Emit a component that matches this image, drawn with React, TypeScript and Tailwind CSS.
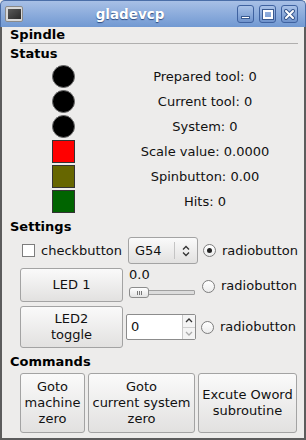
import React from 'react';

const font = { fontFamily: '"DejaVu Sans", "Liberation Sans", sans-serif' };

const TitleButton = ({ children }: { children: React.ReactNode }) => (
  <div className="w-[17px] h-[18px] rounded-[3px] border border-[#3f62a0] bg-gradient-to-b from-[#a9c2e8] to-[#6f93cc] flex items-center justify-center">
    {children}
  </div>
);

const Led = ({ shape, color }: { shape: 'circle' | 'square'; color: string }) =>
  shape === 'circle' ? (
    <div className="w-[23px] h-[23px] rounded-full border border-[#6a6a6a]" style={{ background: color }} />
  ) : (
    <div className="w-[23px] h-[23px] border border-[#333]" style={{ background: color }} />
  );

const Radio = ({ checked }: { checked?: boolean }) => (
  <div className="w-[13px] h-[13px] rounded-full border border-[#7d7d7d] bg-gradient-to-b from-white to-[#ececec] flex items-center justify-center">
    {checked && <div className="w-[5px] h-[5px] rounded-full bg-[#222]" />}
  </div>
);

const Btn = ({ className, children }: { className: string; children: React.ReactNode }) => (
  <div className={`rounded-[3px] border border-[#a3a3a3] bg-gradient-to-b from-[#fafafa] to-[#e2e1e0] flex items-center justify-center text-center leading-[16px] text-[13px] text-[#111] ${className}`}>
    {children}
  </div>
);

const statusRows = [
  { shape: 'circle' as const, color: '#000', label: 'Prepared tool: 0' },
  { shape: 'circle' as const, color: '#000', label: 'Current tool: 0' },
  { shape: 'circle' as const, color: '#000', label: 'System: 0' },
  { shape: 'square' as const, color: '#ff0000', label: 'Scale value: 0.0000' },
  { shape: 'square' as const, color: '#666600', label: 'Spinbutton: 0.00' },
  { shape: 'square' as const, color: '#006400', label: 'Hits: 0' },
];

export default function App() {
  return (
    <div className="w-[306px] h-[440px] flex flex-col bg-[#edeceb] text-[#111]" style={font}>
      {/* title bar */}
      <div className="h-[27px] shrink-0 flex items-center px-[4px] bg-gradient-to-b from-[#a8c0e6] to-[#7199d2] border-x border-t border-[#4b6ea8] rounded-t-[5px]">
        <div className="w-[18px] h-[16px] rounded-[2px] bg-[#d8d8d8] border border-[#8a8a8a] flex items-center justify-center">
          <div className="w-[13px] h-[10px] bg-gradient-to-br from-[#5a5a5a] to-[#2a2a2a]" />
        </div>
        <div className="flex-1 text-center text-white font-bold text-[13.5px] [text-shadow:0_1px_1px_#2b4a80]">gladevcp</div>
        <div className="flex gap-[5px] mr-[3px]">
          <TitleButton>
            <div className="w-[9px] h-[3px] bg-white border border-[#3a5a90] mt-[7px]" />
          </TitleButton>
          <TitleButton>
            <div className="w-[10px] h-[9px] border-2 border-white outline outline-1 outline-[#3a5a90]" />
          </TitleButton>
          <TitleButton>
            <svg width="11" height="11" viewBox="0 0 11 11">
              <path d="M2 2 L9 9 M9 2 L2 9" stroke="#3a5a90" strokeWidth="4" strokeLinecap="round" />
              <path d="M2 2 L9 9 M9 2 L2 9" stroke="#fff" strokeWidth="2" strokeLinecap="round" />
            </svg>
          </TitleButton>
        </div>
      </div>

      {/* body */}
      <div className="flex-1 flex flex-col border-x-2 border-b-2 border-[#5c5c5c]">
        <div className="h-[15px] ml-[8px] font-bold text-[13px] leading-[15px] text-black">Spindle</div>
        <div className="h-px ml-[18px] mr-[6px] mt-[1px] bg-[#b0afae]" />
        <div className="h-[15px] ml-[8px] mt-[2px] font-bold text-[13px] leading-[15px] text-black">Status</div>

        <div className="mt-[3px] flex flex-col">
          {statusRows.map((r) => (
            <div key={r.label} className="h-[25px] flex items-center">
              <div className="w-[122px] flex justify-center">
                <Led shape={r.shape} color={r.color} />
              </div>
              <div className="w-[162px] text-center text-[13px]">{r.label}</div>
            </div>
          ))}
        </div>

        <div className="h-[15px] ml-[8px] mt-[5px] font-bold text-[13px] leading-[15px] text-black">Settings</div>

        {/* row 1 */}
        <div className="h-[27px] mt-[3px] flex items-center text-[13px]">
          <div className="ml-[20px] w-[13px] h-[13px] border border-[#7d7d7d] bg-white" />
          <span className="ml-[6px]">checkbutton</span>
          <div className="ml-[6px] w-[70px] h-[27px] rounded-[3px] border border-[#a3a3a3] bg-gradient-to-b from-[#fafafa] to-[#e2e1e0] flex items-center">
            <span className="ml-[6px] flex-1">G54</span>
            <div className="w-px h-[17px] bg-[#c4c4c4]" />
            <svg className="mx-[7px]" width="8" height="12" viewBox="0 0 8 12">
              <path d="M1 4.5 L4 1.5 L7 4.5 M1 7.5 L4 10.5 L7 7.5" stroke="#333" strokeWidth="1.3" fill="none" />
            </svg>
          </div>
          <div className="ml-[5px]"><Radio checked /></div>
          <span className="ml-[6px]">radiobutton</span>
        </div>

        {/* row 2 */}
        <div className="h-[34px] mt-[4px] flex items-center text-[13px]">
          <Btn className="ml-[18px] w-[103px] h-[34px]">LED 1</Btn>
          <div className="ml-[5px] w-[69px] h-[34px] flex flex-col">
            <span className="ml-[1px] leading-[14px]">0.0</span>
            <div className="mt-[5px] relative h-[11px] flex items-center">
              <div className="ml-[2px] w-[65px] h-[5px] border border-[#a0a0a0] bg-[#dcdcdc] rounded-[1px]" />
              <div className="absolute left-[1px] top-0 w-[20px] h-[11px] rounded-[3px] border border-[#8c8c8c] bg-gradient-to-b from-white to-[#e3e3e3] flex items-center justify-center gap-[1px]">
                <div className="w-px h-[4px] bg-[#777]" />
                <div className="w-px h-[4px] bg-[#777]" />
                <div className="w-px h-[4px] bg-[#777]" />
              </div>
            </div>
          </div>
          <div className="ml-[5px] mt-[2px]"><Radio /></div>
          <span className="ml-[6px] mt-[2px]">radiobutton</span>
        </div>

        {/* row 3 */}
        <div className="h-[42px] mt-[4px] flex items-center text-[13px]">
          <Btn className="ml-[18px] w-[103px] h-[42px]">LED2<br />toggle</Btn>
          <div className="ml-[3px] w-[70px] h-[26px] border border-[#8c8c8c] bg-white rounded-[2px] flex items-stretch">
            <span className="flex-1 pl-[4px] flex items-center">0</span>
            <div className="w-[13px] flex flex-col border-l border-[#c8c8c8] bg-[#f4f4f4]">
              <div className="flex-1 flex items-center justify-center border-b border-[#d0d0d0]">
                <svg width="8" height="5" viewBox="0 0 8 5"><path d="M1 4 L4 1 L7 4" stroke="#333" strokeWidth="1.3" fill="none" /></svg>
              </div>
              <div className="flex-1 flex items-center justify-center">
                <svg width="8" height="5" viewBox="0 0 8 5"><path d="M1 1 L4 4 L7 1" stroke="#aaa" strokeWidth="1.3" fill="none" /></svg>
              </div>
            </div>
          </div>
          <div className="ml-[5px]"><Radio /></div>
          <span className="ml-[6px]">radiobutton</span>
        </div>

        <div className="h-[15px] ml-[8px] mt-[6px] font-bold text-[13px] leading-[15px] text-black">Commands</div>

        <div className="mt-[4px] flex gap-[3px] ml-[18px]">
          <Btn className="w-[65px] h-[60px]">Goto<br />machine<br />zero</Btn>
          <Btn className="w-[107px] h-[60px]">Goto<br />current system<br />zero</Btn>
          <Btn className="w-[99px] h-[60px]">Excute Oword<br />subroutine</Btn>
        </div>
      </div>
    </div>
  );
}
